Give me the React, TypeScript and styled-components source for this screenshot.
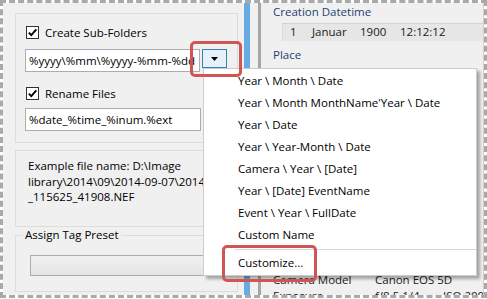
import styled, { createGlobalStyle } from "styled-components";

const GlobalStyle = createGlobalStyle`
  html, body {
    margin: 0;
    padding: 0;
    background: #ffffff;
  }
  body {
    font-family: "Open Sans", "Noto Sans", sans-serif;
    font-size: 11.5px;
    color: #000;
  }
`;

const Frame = styled.div`
  position: relative;
  width: 487px;
  height: 298px;
  box-sizing: border-box;
  border: 3px dashed #a9a9a9;
  background: #f0f0f0;
  background-clip: padding-box;
  display: flex;
  overflow: hidden;
`;

const LeftPanel = styled.div`
  width: 241px;
  flex-shrink: 0;
  box-sizing: border-box;
  padding: 10px 6px 0 12px;
  display: flex;
  flex-direction: column;
`;

const Group = styled.div<{ $height: number }>`
  box-sizing: border-box;
  height: ${(p) => p.$height}px;
  border: 1px solid #dcdcdc;
`;

const OptionsGroup = styled(Group)`
  padding: 12px 10px 0 9px;
  display: flex;
  flex-direction: column;
`;

const CheckRow = styled.label<{ $top: number }>`
  display: flex;
  align-items: center;
  gap: 6px;
  height: 13px;
  margin-top: ${(p) => p.$top}px;
  margin-left: 1px;
  white-space: nowrap;
`;

const CheckBox = styled.span`
  width: 13px;
  height: 13px;
  box-sizing: border-box;
  border: 1px solid #333333;
  background: #ffffff;
  display: flex;
  align-items: center;
  justify-content: center;
`;

const InputRow = styled.div<{ $top: number }>`
  display: flex;
  align-items: flex-start;
  gap: 2px;
  margin-top: ${(p) => p.$top}px;
`;

const TextBox = styled.div`
  width: 176px;
  height: 23px;
  box-sizing: border-box;
  border: 1px solid #abadb3;
  background: #ffffff;
  padding: 0 3px;
  line-height: 21px;
  white-space: nowrap;
  overflow: hidden;
`;

const DropButton = styled.div`
  width: 25px;
  height: 19px;
  box-sizing: border-box;
  border: 1px solid #3c7fb1;
  background: #e5f1fb;
  display: flex;
  align-items: center;
  justify-content: center;
`;

const ExampleGroup = styled(Group)`
  margin-top: 7px;
  padding: 7px 0 0 12px;
  overflow: hidden;
`;

const ExampleLine = styled.div`
  line-height: 15.5px;
  white-space: nowrap;
`;

const TagGroup = styled.fieldset`
  margin: 0;
  height: 65px;
  box-sizing: border-box;
  border: 1px solid #dcdcdc;
  padding: 0 14px;
`;

const TagLegend = styled.legend`
  margin-left: -7px;
  padding: 0 2px;
  line-height: 16px;
`;

const Combo = styled.div`
  margin-top: 12px;
  width: 190px;
  height: 21px;
  box-sizing: border-box;
  border: 1px solid #acacac;
  background: linear-gradient(#f0f0f0, #e5e5e5);
`;

const Splitter = styled.div`
  width: 6px;
  flex-shrink: 0;
  background: #66abe2;
`;

const Divider = styled.div`
  width: 3px;
  flex-shrink: 0;
  margin-left: 8px;
  background: #a6a6a6;
`;

const RightPanel = styled.div`
  flex: 1;
  padding-left: 12px;
  display: flex;
  flex-direction: column;
  overflow: hidden;
  border-right: 1px solid #d0d0d0;
`;

const FieldLabel = styled.div<{ $top: number }>`
  color: #1e3f73;
  line-height: 16px;
  margin-top: ${(p) => p.$top}px;
  white-space: nowrap;
`;

const DateBox = styled.div`
  margin: 3px 0 0 9px;
  height: 18px;
  box-sizing: border-box;
  border-top: 1px solid #d3d3d3;
  border-left: 1px solid #dadada;
  background: #e6e6e6;
  padding-left: 7px;
  display: grid;
  grid-template-columns: 22px 48px 40px auto;
  line-height: 16px;
  color: #1a1a1a;
  white-space: nowrap;
`;

const InfoRows = styled.div`
  margin-top: auto;
  margin-bottom: -9px;
`;

const InfoRow = styled.div`
  display: grid;
  grid-template-columns: 102px 68px auto;
  line-height: 16px;
  color: #1a1a1a;
  white-space: nowrap;
`;

const Menu = styled.div`
  position: absolute;
  left: 200px;
  top: 65px;
  width: 274px;
  box-sizing: border-box;
  padding: 1px 0;
  background: #ffffff;
  border: 1px solid #cccccc;
  box-shadow: 3px 3px 3px rgba(0, 0, 0, 0.32);
`;

const MenuItem = styled.div`
  height: 22px;
  line-height: 22px;
  padding-left: 34px;
  white-space: nowrap;
`;

const MenuSeparator = styled.div`
  height: 6px;
  display: flex;
  align-items: center;
  padding-left: 31px;
  &::after {
    content: "";
    flex: 1;
    height: 1px;
    background: #d7d7d7;
  }
`;

const Highlight = styled.div<{ $x: number; $y: number; $w: number; $h: number }>`
  position: absolute;
  left: ${(p) => p.$x}px;
  top: ${(p) => p.$y}px;
  width: ${(p) => p.$w}px;
  height: ${(p) => p.$h}px;
  box-sizing: border-box;
  border: 3px solid #d05656;
  border-radius: 5px;
`;

const menuItems = [
  "Year \\ Month \\ Date",
  "Year \\ Month MonthName'Year \\ Date",
  "Year \\ Date",
  "Year \\ Year-Month \\ Date",
  "Camera \\ Year \\ [Date]",
  "Year \\ [Date] EventName",
  "Event \\ Year \\ FullDate",
  "Custom Name",
];

function Check() {
  return (
    <CheckBox>
      <svg width="11" height="11" viewBox="0 0 11 11">
        <polyline
          points="1.8,5.6 4.3,8.2 9.3,2.4"
          fill="none"
          stroke="#000"
          strokeWidth="1.9"
        />
      </svg>
    </CheckBox>
  );
}

export default function App() {
  return (
    <>
      <GlobalStyle />
      <Frame>
        <LeftPanel>
          <OptionsGroup $height={130}>
            <CheckRow $top={0}>
              <Check />
              Create Sub-Folders
            </CheckRow>
            <InputRow $top={10}>
              <TextBox>%yyyy\%mm\%yyyy-%mm-%dd</TextBox>
              <DropButton>
                <svg width="7" height="4" viewBox="0 0 7 4">
                  <polygon points="0,0 7,0 3.5,4" fill="#000" />
                </svg>
              </DropButton>
            </InputRow>
            <CheckRow $top={15}>
              <Check />
              Rename Files
            </CheckRow>
            <InputRow $top={8}>
              <TextBox>%date_%time_%inum.%ext</TextBox>
            </InputRow>
          </OptionsGroup>
          <ExampleGroup $height={77}>
            <ExampleLine>Example file name: D:\Image</ExampleLine>
            <ExampleLine>library\2014\09\2014-09-07\20140907</ExampleLine>
            <ExampleLine>_115625_41908.NEF</ExampleLine>
          </ExampleGroup>
          <TagGroup>
            <TagLegend>Assign Tag Preset</TagLegend>
            <Combo />
          </TagGroup>
        </LeftPanel>
        <Splitter />
        <Divider />
        <RightPanel>
          <FieldLabel $top={1}>Creation Datetime</FieldLabel>
          <DateBox>
            <span>1</span>
            <span>Januar</span>
            <span>1900</span>
            <span>12:12:12</span>
          </DateBox>
          <FieldLabel $top={6}>Place</FieldLabel>
          <InfoRows>
            <InfoRow>
              <span>Camera Model</span>
              <span>Canon EOS 5D</span>
              <span />
            </InfoRow>
            <InfoRow>
              <span>Exposure</span>
              <span>f/8.5 1/4</span>
              <span>ISO 200</span>
            </InfoRow>
          </InfoRows>
        </RightPanel>
        <Menu>
          {menuItems.map((item) => (
            <MenuItem key={item}>{item}</MenuItem>
          ))}
          <MenuSeparator />
          <MenuItem>Customize...</MenuItem>
        </Menu>
        <Highlight $x={187} $y={38} $w={52} $h={36} />
        <Highlight $x={219} $y={242} $w={95} $h={37} />
      </Frame>
    </>
  );
}
